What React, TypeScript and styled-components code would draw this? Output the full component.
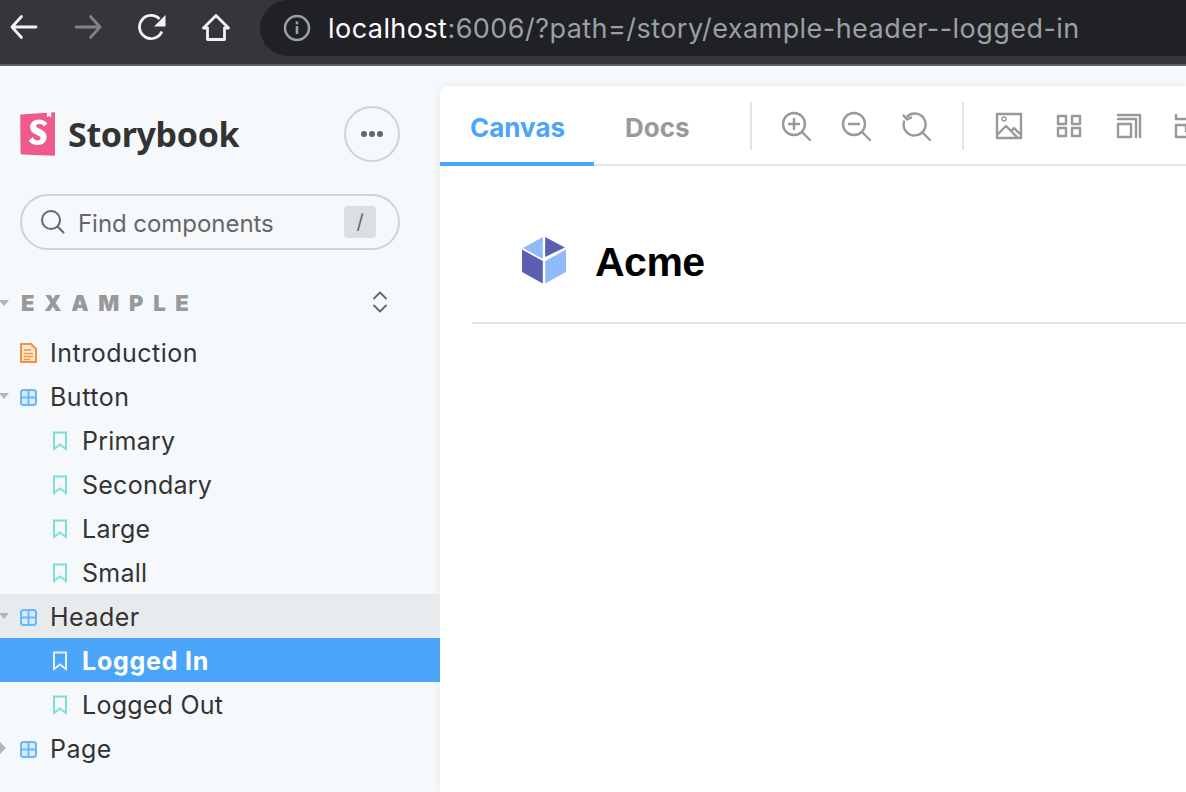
import React from "react";
import styled, { createGlobalStyle } from "styled-components";

const Global = createGlobalStyle`
  html, body { margin: 0; padding: 0; background: #f6f9fc; }
  * { box-sizing: border-box; }
`;

const Page = styled.div`
  width: 1186px; height: 792px; overflow: hidden;
  display: flex; flex-direction: column;
  font-family: Inter, "Liberation Sans", sans-serif;
  background: #f6f9fc;
`;
const ChromeBar = styled.header`
  flex: none; height: 66px; background: #35363a; border-bottom: 2px solid #5f6064;
  display: flex; align-items: flex-start;
`;
const NavIcons = styled.div`
  width: 260px; height: 56px; display: flex; align-items: center; gap: 34px;
  flex: none; padding-left: 9px;
`;
const AddressBar = styled.div`
  flex: 1; height: 56px; background: #202124; border-radius: 28px 0 0 28px;
  display: flex; align-items: center; padding-left: 23px; gap: 17px;
  font-size: 27px; letter-spacing: 0.45px; color: #9aa0a6; white-space: nowrap;
`;
const Host = styled.span`color: #fff;`;
const Body = styled.div`flex: 1; display: flex; min-height: 0;`;
const Sidebar = styled.aside`flex: none; width: 440px; padding-top: 40px; position: relative;`;
const Brand = styled.div`
  height: 56px; margin: 0 40px 0 20px; display: flex; align-items: center;
`;
const BrandName = styled.span`
  margin-left: 12px; font-family: "Noto Sans", sans-serif; font-size: 34px; font-weight: 700;
  letter-spacing: -0.35px; color: #333; flex: 1;
`;
const MoreButton = styled.div`
  width: 56px; height: 56px; border-radius: 50%; border: 2px solid #d0d3d6;
  display: flex; align-items: center; justify-content: center; gap: 2px;
`;
const Dot = styled.i`width: 6px; height: 6px; border-radius: 50%; background: #666;`;
const Search = styled.div`
  margin: 32px 40px 0 20px; height: 56px; border-radius: 28px; border: 2px solid #d0d3d6;
  display: flex; align-items: center; padding: 0 22px 0 19px;
  color: #666; font-size: 24px;
`;
const SearchText = styled.span`margin-left: 13px; flex: 1; padding-top: 2px; letter-spacing: -0.05px;`;
const Key = styled.span`
  width: 32px; height: 32px; border-radius: 4px; background: #dcdfe2; color: #666;
  display: flex; align-items: center; justify-content: center; font-size: 20px;
`;
const Section = styled.div`
  margin: 28px 0 2px; height: 50px; padding: 0 52px 0 21px; display: flex; align-items: center;
  justify-content: space-between; position: relative;
`;
const SectionTitle = styled.span`
  font-size: 22px; font-weight: 900; letter-spacing: 9.7px; color: #999;
`;
const Tree = styled.div`display: flex; flex-direction: column;`;
const Row = styled.div<{ $depth: number; $state?: "hover" | "selected" }>`
  position: relative; height: 44px; display: flex; align-items: center;
  padding: 2px 0 0 ${(p) => (p.$depth ? 52 : 20)}px;
  font-size: 25px;
  letter-spacing: ${(p) => (p.$state === "selected" ? 0.75 : p.$depth ? 0.25 : 0.5)}px;
  color: ${(p) => (p.$state === "selected" ? "#fff" : "#333")};
  font-weight: ${(p) => (p.$state === "selected" ? 700 : 400)};
  background: ${(p) =>
    p.$state === "selected" ? "#4ba5f8" : p.$state === "hover" ? "#e8ebee" : "transparent"};
`;
const IconSlot = styled.span`
  flex: none; width: 30px; display: flex; align-items: center;
`;
const Caret = styled.i<{ $open: boolean }>`
  position: absolute; left: 0; top: 50%; width: 0; height: 0;
  ${(p) =>
    p.$open
      ? `margin-top: -3px; border-left: 5px solid transparent; border-right: 5px solid transparent; border-top: 6px solid #b5b5b5; margin-left: -1px;`
      : `margin-top: -6px; border-top: 6px solid transparent; border-bottom: 6px solid transparent; border-left: 6px solid #b5b5b5;`}
`;
const Main = styled.main`
  flex: 1; margin-top: 20px; background: #fff; border-radius: 8px 0 0 0;
  box-shadow: 0 0 8px rgba(0,0,0,0.07); display: flex; flex-direction: column;
  overflow: hidden; min-width: 0;
`;
const Toolbar = styled.div`
  flex: none; height: 80px; border-bottom: 2px solid #e5e5e5; display: flex; align-items: stretch;
`;
const Tab = styled.div<{ $active?: boolean }>`
  flex: none; height: 80px; width: ${(p) => (p.$active ? 154 : 156)}px; display: flex; align-items: center;
  font-size: 26px; font-weight: 700; padding: 6px 0 0 ${(p) => (p.$active ? 30 : 31)}px;
  color: ${(p) => (p.$active ? "#4ba5f8" : "#999")};
  border-bottom: 4px solid ${(p) => (p.$active ? "#4ba5f8" : "transparent")};
`;
const ToolGroup = styled.div`
  display: flex; align-items: center; gap: 28px; height: 48px; margin-top: 16px;
  padding: 0 30px 0 28px; flex: none;
`;
const Divider = styled.div`width: 2px; height: 48px; margin-top: 16px; background: #e3e3e3; flex: none;`;
const Canvas = styled.div`flex: 1; padding: 0 0 0 32px;`;
const StoryHeader = styled.div`
  height: 158px; border-bottom: 2px solid #e2e2e2; display: flex; align-items: center;
  padding: 32px 0 0 49px;
`;
const Title = styled.h1`
  margin: 4px 0 0 28px; font-family: "Liberation Sans", Arial, sans-serif; font-size: 41px;
  font-weight: 700; color: #000; letter-spacing: -0.5px;
`;

const line = { fill: "none", strokeLinecap: "round", strokeLinejoin: "round" } as const;

const Nav = ({ d, color = "#f1f3f4" }: { d: string; color?: string }) => (
  <svg width="30" height="30" viewBox="0 0 30 30" {...line} stroke={color} strokeWidth="2.8"><path d={d} /></svg>
);

const Reload = () => (
  <svg width="30" height="30" viewBox="0 0 30 30" fill="none">
    <path d="M24.8 18.5A11.6 11.6 0 1 1 22.5 6" stroke="#f1f3f4" strokeWidth="2.8" />
    <path d="M28.5 2v11.5H17z" fill="#f1f3f4" />
  </svg>
);

const Info = () => (
  <svg width="28" height="28" viewBox="0 0 28 28" fill="none">
    <circle cx="14" cy="14" r="12" stroke="#9aa0a6" strokeWidth="2.5" />
    <rect x="12.7" y="12" width="2.6" height="8" fill="#9aa0a6" />
    <rect x="12.7" y="7.5" width="2.6" height="2.8" fill="#9aa0a6" />
  </svg>
);

const Logo = () => (
  <svg width="36" height="44" viewBox="0 0 36 44">
    <path d="M0.2 2.6 35 0.2V42.6a1.2 1.2 0 0 1-1.3 1.2L1.8 42.4a1.2 1.2 0 0 1-1.2-1.1z" fill="#ee5a8b" />
    <path d="M27 .4 26.8 5.6 29 4l2.2 1.4V.2z" fill="#fff" />
    <path d="M24.2 14.6c-1.6-2-3.4-2.6-5.2-2.6-1.6 0-2.8.8-2.8 2 0 3.4 10.4 2.6 10.4 11 0 5-3.8 8-9 8-3.8 0-7.2-1.6-9-4.6l4.2-3.2c1.2 2.2 3 3.2 4.8 3.2 1.8 0 3-.8 3-2.4 0-3.6-10.4-3-10.4-10.8 0-4.8 3.8-7.8 8.6-7.8 3.4 0 6.4 1.4 8.6 4z" fill="#fff" />
  </svg>
);

const SearchIcon = () => (
  <svg width="24" height="24" viewBox="0 0 24 24" {...line} stroke="#666" strokeWidth="2"><circle cx="10" cy="10" r="9" /><path d="M16.5 16.5l6 6" /></svg>
);

const Chevrons = () => (
  <svg width="16" height="24" viewBox="0 0 16 24" {...line} stroke="#666" strokeWidth="1.8" style={{ marginTop: -2 }}><path d="M2 8.5l6-6 6 6M2 15.5l6 6 6-6" /></svg>
);

const DocIcon = () => (
  <svg width="17" height="20" viewBox="0 0 17 20" fill="none" stroke="#fb8f35" strokeWidth="2">
    <path d="M1 1h10l5 5v13H1z" strokeLinejoin="round" fill="#fdecdc" />
    <path d="M4 7h7M4 10.5h9M4 13.5h9M4 16.5h6" strokeWidth="1.6" />
  </svg>
);
const ComponentIcon = () => (
  <svg width="17" height="17" viewBox="0 0 17 17" fill="none" stroke="#6bb5fb">
    <rect x="1" y="1" width="15" height="15" rx="2.5" strokeWidth="2" fill="#d7ebfd" />
    <path d="M8.5 1v15M1 8.5h15" strokeWidth="2" />
  </svg>
);
const Bookmark = ({ white }: { white?: boolean }) => (
  <svg width="16" height="20" viewBox="0 0 16 20" fill="none" stroke={white ? "#e4f1fe" : "#7fdcd8"} strokeWidth="2">
    <path d="M2 1.5h12v16.5l-6-4.5-6 4.5z" />
  </svg>
);

const Tool = ({ children }: { children: React.ReactNode }) => (
  <svg width="32" height="32" viewBox="0 0 32 32" {...line} stroke="#999" strokeWidth="2.4" style={{ flex: "none" }}>{children}</svg>
);

const Cube = () => (
  <svg width="46" height="48" viewBox="0 0 46 48" style={{ flex: "none" }}>
    <path d="M21.8 1 2 12 21.8 23z" fill="#91baf8" />
    <path d="M24.2 1V21l19.6-9.4z" fill="#5a5fb4" />
    <path d="M1 13.5 21.8 25V47.5L1 36z" fill="#5a5fb4" />
    <path d="M45 13.5 24.2 25V47.5L45 36z" fill="#91baf8" />
  </svg>
);

type Item = { label: string; kind: "doc" | "comp" | "story"; open?: boolean; state?: "hover" | "selected" };
const items: Item[] = [
  { label: "Introduction", kind: "doc" },
  { label: "Button", kind: "comp", open: true },
  { label: "Primary", kind: "story" },
  { label: "Secondary", kind: "story" },
  { label: "Large", kind: "story" },
  { label: "Small", kind: "story" },
  { label: "Header", kind: "comp", open: true, state: "hover" },
  { label: "Logged In", kind: "story", state: "selected" },
  { label: "Logged Out", kind: "story" },
  { label: "Page", kind: "comp", open: false },
];

export default function App() {
  return (
    <Page>
      <Global />
      <ChromeBar>
        <NavIcons>
          <Nav d="M27 14H3.5M12.5 3.5 3 14l9.5 10.5" />
          <Nav d="M3 14H26.5M17.5 3.5 27 14l-9.5 10.5" color="#808285" />
          <Reload />
          <Nav d="M2.5 15 15 2.5 27.5 15h-4v11.5H6.5V15z" />
        </NavIcons>
        <AddressBar>
          <Info />
          <span><Host>localhost</Host>:6006/?path=/story/example-header--logged-in</span>
        </AddressBar>
      </ChromeBar>
      <Body>
        <Sidebar>
          <Brand>
            <Logo />
            <BrandName>Storybook</BrandName>
            <MoreButton><Dot /><Dot /><Dot /></MoreButton>
          </Brand>
          <Search>
            <SearchIcon />
            <SearchText>Find components</SearchText>
            <Key>/</Key>
          </Search>
          <Section>
            <Caret $open />
            <SectionTitle>EXAMPLE</SectionTitle>
            <Chevrons />
          </Section>
          <Tree>
            {items.map((it) => (
              <Row key={it.label} $depth={it.kind === "story" ? 1 : 0} $state={it.state}>
                {it.open !== undefined && <Caret $open={it.open} />}
                <IconSlot>
                  {it.kind === "doc" && <DocIcon />}
                  {it.kind === "comp" && <ComponentIcon />}
                  {it.kind === "story" && <Bookmark white={it.state === "selected"} />}
                </IconSlot>
                <span>{it.label}</span>
              </Row>
            ))}
          </Tree>
        </Sidebar>
        <Main>
          <Toolbar>
            <Tab $active>Canvas</Tab>
            <Tab>Docs</Tab>
            <Divider />
            <ToolGroup>
              <Tool><circle cx="14" cy="14" r="11" /><path d="M22 22l8 8M14 9v10M9 14h10" /></Tool>
              <Tool><circle cx="14" cy="14" r="11" /><path d="M22 22l8 8M9 14h10" /></Tool>
              <Tool><path d="M7 6.5a11 11 0 1 1-3 5M22 22l8 8M3.5 5.5l3.5 4 4-2" /></Tool>
            </ToolGroup>
            <Divider />
            <ToolGroup>
              <Tool><path d="M5 4h24v24H5zM5 25l9-9 12 12M19 21l3-3 7 7" /><circle cx="12" cy="9" r="2" strokeWidth="1.4" /></Tool>
              <Tool><path d="M6 6h8v8H6zM20 6h8v8h-8zM6 18h8v8H6zM20 18h8v8h-8z" /></Tool>
              <Tool><path d="M6 14h13v13H6zM6 9h18v18M6 5h22v22" /></Tool>
              <Tool><path d="M4 5v4M4 9h20M4 15h20v12H4zM14 15v6" /></Tool>
            </ToolGroup>
          </Toolbar>
          <Canvas>
            <StoryHeader>
              <Cube />
              <Title>Acme</Title>
            </StoryHeader>
          </Canvas>
        </Main>
      </Body>
    </Page>
  );
}
